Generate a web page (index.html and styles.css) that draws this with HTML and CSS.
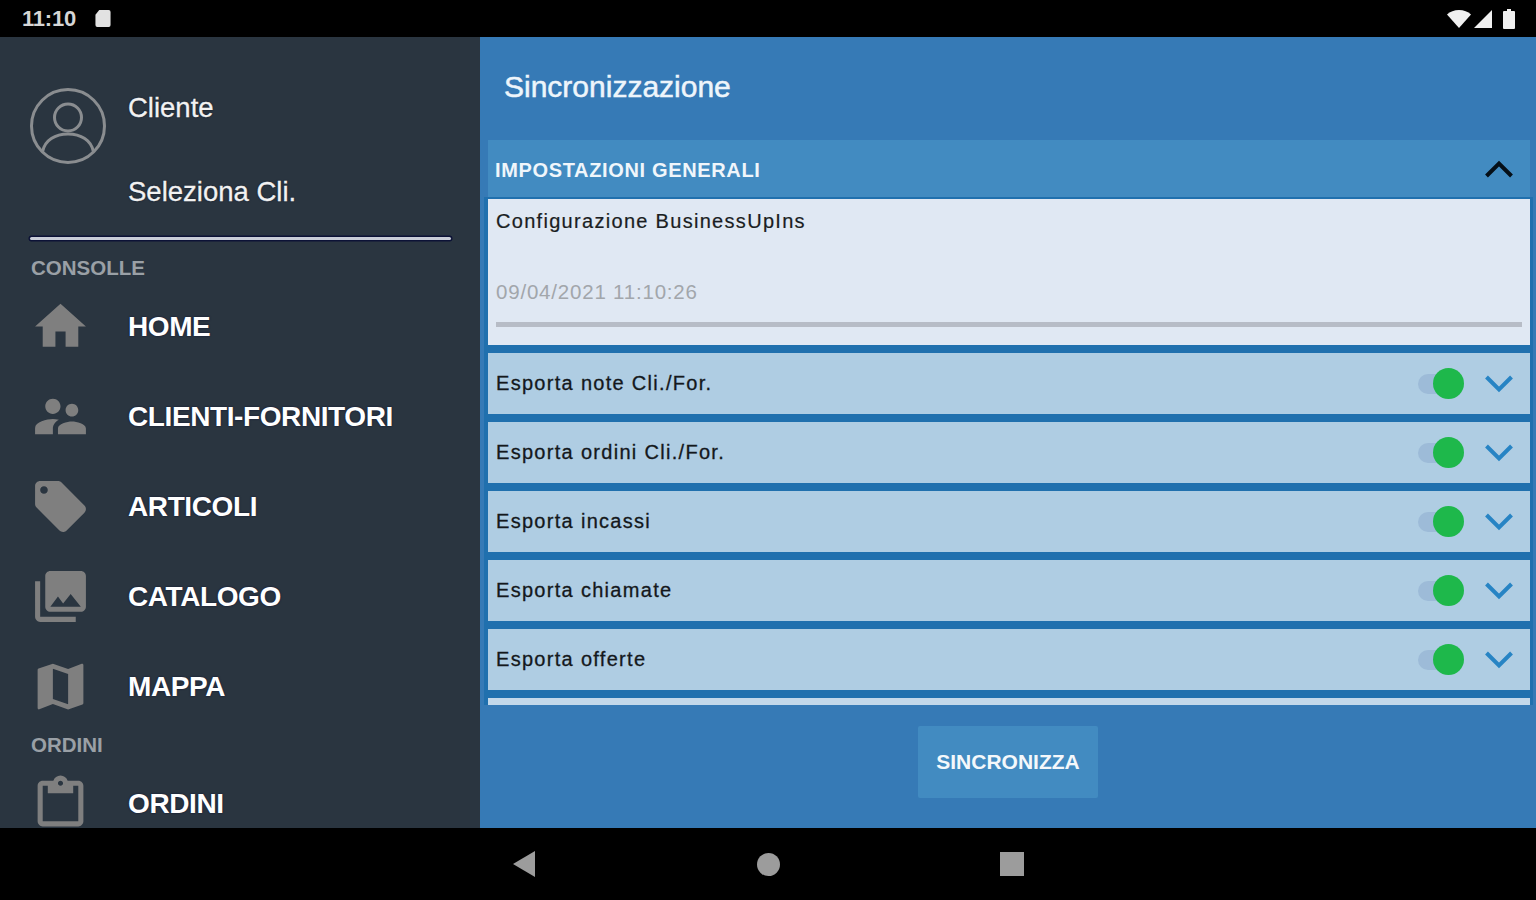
FILE: index.html
```html
<!DOCTYPE html>
<html lang="it">
<head>
<meta charset="utf-8">
<title>Sincronizzazione</title>
<link rel="stylesheet" href="styles.css">
</head>
<body>
<div class="statusbar">
  <div class="status-left">
    <span class="clock">11:10</span>
    <svg class="sd" viewBox="0 0 16 18"><path d="M4 0h10a2 2 0 0 1 2 2v14a2 2 0 0 1-2 2H2a2 2 0 0 1-2-2V5z"/></svg>
  </div>
  <div class="status-right">
    <svg class="wifi" viewBox="0 0 24 18"><path d="M0 4.5C3 1.700 7.300 0 12 0s9 1.700 12 4.500L12 18z"/></svg>
    <svg class="signal" viewBox="0 0 18 18"><path d="M18 0v18H0z"/></svg>
    <svg class="battery" viewBox="0 0 12 20"><path d="M4 0h4v2h3a1 1 0 0 1 1 1v16a1 1 0 0 1-1 1H1a1 1 0 0 1-1-1V3a1 1 0 0 1 1-1h3z"/></svg>
  </div>
</div>

<div class="app">
  <aside class="sidebar">
    <div class="profile">
      <svg class="avatar" viewBox="0 0 76 76">
        <circle cx="38" cy="38" r="36.500"/>
        <circle cx="38" cy="29.500" r="13.500"/>
        <path d="M12.500 64c2-12 13-18 25.500-18s23.500 6 25.500 18"/>
      </svg>
      <div class="profile-text">
        <div class="profile-line">Cliente</div>
        <div class="profile-line">Seleziona Cli.</div>
      </div>
    </div>
    <div class="divider"></div>

    <div class="section">CONSOLLE</div>
    <div class="item">
      <svg class="icon" viewBox="0 0 24 24"><path d="M10 20v-6h4v6h5v-8h3L12 3 2 12h3v8z"/></svg>
      <span class="item-label">HOME</span>
    </div>
    <div class="item">
      <svg class="icon" viewBox="0 0 24 24"><path d="M16.500 12c1.380 0 2.490-1.120 2.490-2.500S17.880 7 16.500 7C15.120 7 14 8.120 14 9.500s1.120 2.500 2.500 2.500zM9 11c1.660 0 3-1.340 3-3s-1.340-3-3-3-3 1.340-3 3 1.340 3 3 3zm7.500 3c-1.830 0-5.500.92-5.500 2.750V19h11v-2.250c0-1.830-3.670-2.750-5.500-2.750zM9 13c-2.330 0-7 1.170-7 3.500V19h7v-2.250c0-.85.33-2.340 2.370-3.470C10.500 13.100 9.660 13 9 13z"/></svg>
      <span class="item-label">CLIENTI-FORNITORI</span>
    </div>
    <div class="item">
      <svg class="icon" viewBox="0 0 24 24"><path d="M21.410 11.580l-9-9C12.050 2.220 11.550 2 11 2H4c-1.100 0-2 .9-2 2v7c0 .55.22 1.050.59 1.420l9 9c.36.36.86.58 1.410.58.55 0 1.050-.22 1.410-.59l7-7c.37-.36.59-.86.59-1.410 0-.55-.23-1.060-.59-1.420zM5.500 7C4.670 7 4 6.330 4 5.500S4.670 4 5.500 4 7 4.670 7 5.500 6.330 7 5.500 7z"/></svg>
      <span class="item-label">ARTICOLI</span>
    </div>
    <div class="item">
      <svg class="icon" viewBox="0 0 24 24"><path d="M22 16V4c0-1.100-.9-2-2-2H8c-1.100 0-2 .9-2 2v12c0 1.100.9 2 2 2h12c1.100 0 2-.9 2-2zm-11-4l2.030 2.710L16 11l4 5H8l3-4zM2 6v14c0 1.100.9 2 2 2h14v-2H4V6H2z"/></svg>
      <span class="item-label">CATALOGO</span>
    </div>
    <div class="item">
      <svg class="icon" viewBox="0 0 24 24"><path d="M20.500 3l-.16.03L15 5.100 9 3 3.360 4.900c-.21.07-.36.25-.36.48V20.500c0 .28.22.5.5.5l.16-.03L9 18.900l6 2.100 5.640-1.900c.21-.07.36-.25.36-.48V3.500c0-.28-.22-.5-.5-.5zM15 19l-6-2.110V5l6 2.110V19z"/></svg>
      <span class="item-label">MAPPA</span>
    </div>

    <div class="section">ORDINI</div>
    <div class="item">
      <svg class="icon" viewBox="0 0 24 24"><path d="M19 3h-4.180C14.400 1.840 13.300 1 12 1c-1.300 0-2.400.84-2.820 2H5c-1.100 0-2 .9-2 2v14c0 1.100.9 2 2 2h14c1.100 0 2-.9 2-2V5c0-1.100-.9-2-2-2zm-7 0c.55 0 1 .45 1 1s-.45 1-1 1-1-.45-1-1 .45-1 1-1zm7 16H5V5h2v3h10V5h2v14z"/></svg>
      <span class="item-label">ORDINI</span>
    </div>
  </aside>

  <main class="content">
    <h1 class="title">Sincronizzazione</h1>
    <section class="panel">
      <div class="panel-head">
        <span class="panel-title">IMPOSTAZIONI GENERALI</span>
        <svg class="chev chev-dark" viewBox="0 0 30 20"><path d="M2.500 17L15 4.500 27.500 17"/></svg>
      </div>
      <div class="list">
        <div class="card">
          <div class="card-name">Configurazione BusinessUpIns</div>
          <div class="card-date">09/04/2021 11:10:26</div>
          <div class="card-bar"></div>
        </div>
        <div class="row">
          <span class="row-label">Esporta note Cli./For.</span>
          <span class="toggle"><span class="knob"></span></span>
          <svg class="chev chev-blue" viewBox="0 0 30 20"><path d="M2.500 3L15 15.500 27.500 3"/></svg>
        </div>
        <div class="row">
          <span class="row-label">Esporta ordini Cli./For.</span>
          <span class="toggle"><span class="knob"></span></span>
          <svg class="chev chev-blue" viewBox="0 0 30 20"><path d="M2.500 3L15 15.500 27.500 3"/></svg>
        </div>
        <div class="row">
          <span class="row-label">Esporta incassi</span>
          <span class="toggle"><span class="knob"></span></span>
          <svg class="chev chev-blue" viewBox="0 0 30 20"><path d="M2.500 3L15 15.500 27.500 3"/></svg>
        </div>
        <div class="row">
          <span class="row-label">Esporta chiamate</span>
          <span class="toggle"><span class="knob"></span></span>
          <svg class="chev chev-blue" viewBox="0 0 30 20"><path d="M2.500 3L15 15.500 27.500 3"/></svg>
        </div>
        <div class="row">
          <span class="row-label">Esporta offerte</span>
          <span class="toggle"><span class="knob"></span></span>
          <svg class="chev chev-blue" viewBox="0 0 30 20"><path d="M2.500 3L15 15.500 27.500 3"/></svg>
        </div>
        <div class="row-stub"></div>
      </div>
    </section>
    <div class="actions">
      <div class="sync-btn">SINCRONIZZA</div>
    </div>
  </main>
</div>

<div class="navbar">
  <svg class="nav-back" viewBox="0 0 22 26"><path d="M22 0v26L0 13z"/></svg>
  <span class="nav-home"></span>
  <span class="nav-recent"></span>
</div>
</body>
</html>
```

FILE: styles.css
```css
* { box-sizing: border-box; }

html, body {
  margin: 0;
  padding: 0;
  width: 1536px;
  height: 900px;
  overflow: hidden;
  background: #000;
  font-family: "Liberation Sans", Arial, sans-serif;
}

/* status bar */
.statusbar {
  height: 37px;
  background: #000;
  display: flex;
  align-items: center;
  justify-content: space-between;
  padding: 0 21px 0 22px;
}
.status-left { display: flex; align-items: center; gap: 19px; }
.clock { color: #d6d6d6; font-size: 22px; font-weight: 700; letter-spacing: -0.2px; }
.sd { width: 16px; height: 17px; fill: #e2e2e2; }
.status-right { display: flex; align-items: center; }
.wifi { width: 24px; height: 18px; fill: #f0f0f0; }
.signal { width: 18px; height: 18px; fill: #f0f0f0; margin-left: 3px; }
.battery { width: 12px; height: 20px; fill: #f0f0f0; margin-left: 11px; }

/* layout */
.app { display: flex; height: 791px; }

/* sidebar */
.sidebar {
  width: 480px;
  flex: none;
  background: #2a3540;
  overflow: hidden;
}
.profile {
  display: flex;
  padding: 51px 0 0 30px;
  height: 200px;
}
.avatar {
  width: 76px;
  height: 76px;
  flex: none;
  fill: none;
  stroke: #8a8d90;
  stroke-width: 3;
}
.profile-text {
  margin: 0 0 0 22px;
  display: flex;
  flex-direction: column;
  gap: 44px;
}
.profile-line {
  height: 40px;
  line-height: 40px;
  font-size: 27.500px;
  color: #f2f2f2;
  text-shadow: 0 0 2px #0b1020;
  -webkit-text-stroke: 0.300px #f2f2f2;
}
.divider {
  width: 421px;
  height: 3px;
  margin-left: 30px;
  background: #c9cdd8;
  border-radius: 2px;
  box-shadow: 0 0 0 1.500px #0c1236;
}
.section {
  height: 27px;
  line-height: 27px;
  padding-left: 31px;
  color: #9aa0a6;
  font-size: 20.500px;
  font-weight: 700;
}
.divider + .section { margin-top: 14px; }
.item {
  height: 90px;
  display: flex;
  align-items: center;
  padding-left: 30px;
}
.icon { width: 61px; height: 61px; flex: none; fill: #7f7f7f; }
.item-label {
  margin: 2px 0 0 37px;
  color: #fff;
  font-size: 28px;
  font-weight: 700;
  letter-spacing: -0.400px;
  text-shadow: 0 0 2px #0b1030;
}

/* content */
.content {
  flex: 1;
  min-width: 0;
  background: #367ab6;
  display: flex;
  flex-direction: column;
}
.title {
  margin: 0;
  height: 103px;
  line-height: 99px;
  padding-left: 24px;
  color: #eef5fb;
  font-size: 30px;
  font-weight: 400;
  -webkit-text-stroke: 0.500px #eef5fb;
}
.panel { margin: 0 6px 0 8px; }
.panel-head {
  height: 57px;
  background: #428bc1;
  display: flex;
  align-items: center;
  justify-content: space-between;
  padding: 0 16px 0 7px;
}
.panel-title {
  margin-top: 4px;
  color: #f0f6fb;
  font-size: 20px;
  font-weight: 700;
  letter-spacing: 0.650px;
}
.chev { width: 30px; height: 20px; fill: none; stroke-width: 4px; }
.chev-dark { stroke: #050f18; }
.chev-blue { stroke: #2784c4; }
.list {
  margin: 0 -3px 0 -4px;
  padding: 2px 3px 0 4px;
  background: #2070ae;
  display: flex;
  flex-direction: column;
  gap: 8px;
}
.card {
  height: 146px;
  background: #e0e8f3;
  padding: 0 8px;
  display: flex;
  flex-direction: column;
}
.card-name {
  margin-top: 10px;
  height: 24px;
  line-height: 24px;
  color: #1a1d22;
  font-size: 20px;
  letter-spacing: 1.300px;
  -webkit-text-stroke: 0.200px #1a1d22;
}
.card-date {
  margin-top: 47px;
  height: 24px;
  line-height: 24px;
  color: #a2a6ab;
  font-size: 20.500px;
  letter-spacing: 0.800px;
}
.card-bar {
  margin-top: 18px;
  height: 5px;
  background: #b7bcc6;
}
.row {
  height: 61px;
  background: #afcde3;
  display: flex;
  align-items: center;
  padding: 0 16px 0 8px;
}
.row-label {
  flex: 1;
  color: #14181c;
  font-size: 20px;
  letter-spacing: 1.300px;
  -webkit-text-stroke: 0.300px #14181c;
}
.toggle {
  position: relative;
  width: 34px;
  height: 20px;
  margin-right: 32px;
  background: #9dbbd8;
  border-radius: 10px;
}
.knob {
  position: absolute;
  top: -5.500px;
  right: -12px;
  width: 31px;
  height: 31px;
  border-radius: 50%;
  background: #1eb84b;
}
.row-stub {
  height: 7px;
  background: #c3d8ea;
}
.actions {
  flex: 1;
  display: flex;
  justify-content: center;
  align-items: flex-start;
  padding-top: 21px;
  background: #367ab6;
}
.sync-btn {
  width: 180px;
  height: 72px;
  background: #428bc1;
  border-radius: 2px;
  color: #f4f8fb;
  font-size: 21px;
  font-weight: 700;
  display: flex;
  align-items: center;
  justify-content: center;
}

/* navigation bar */
.navbar {
  height: 72px;
  background: #000;
  display: flex;
  align-items: center;
  padding-left: 513px;
}
.nav-back { width: 22px; height: 26px; fill: #9c9c9c; }
.nav-home {
  width: 23px;
  height: 23px;
  margin-left: 222px;
  border-radius: 50%;
  background: #9c9c9c;
}
.nav-recent {
  width: 24px;
  height: 24px;
  margin-left: 220px;
  background: #9c9c9c;
}
```
